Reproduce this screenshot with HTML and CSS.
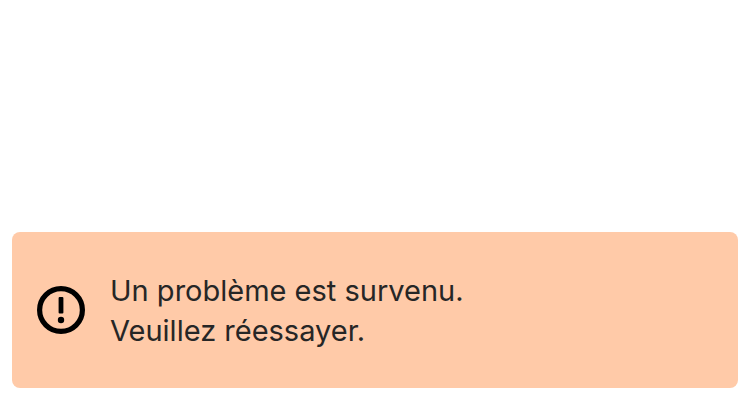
FILE: index.html
```html
<!DOCTYPE html>
<html lang="fr">
<head>
<meta charset="utf-8">
<title>Erreur</title>
<link rel="stylesheet" href="styles.css">
</head>
<body>
<main class="page">
  <div class="alert" role="alert">
    <svg class="alert-icon" viewBox="0 0 48 48" aria-hidden="true">
      <circle cx="24" cy="24" r="21.4" fill="none" stroke="#000" stroke-width="5.2"/>
      <rect x="21.6" y="11" width="4.8" height="16.6" rx="1" fill="#000"/>
      <circle cx="24" cy="34" r="3.2" fill="#000"/>
    </svg>
    <p class="alert-text">Un problème est survenu.<br>Veuillez réessayer.</p>
  </div>
</main>
</body>
</html>
```
FILE: styles.css
```css
body {
  margin: 0;
  background: #fff;
  color: #262626;
  font-family: Inter, "Liberation Sans", sans-serif;
}

.page {
  display: flex;
  flex-direction: column;
  justify-content: flex-end;
  box-sizing: border-box;
  min-height: 100vh;
  padding: 12px;
}

.alert {
  display: flex;
  align-items: center;
  gap: 25px;
  padding: 37px 25px;
  border-radius: 8px;
  background: #ffcaa8;
}

.alert-icon {
  flex: none;
  width: 48px;
  height: 48px;
}

.alert-text {
  margin: 0;
  padding-top: 2px;
  font-size: 29px;
  line-height: 40px;
}
```
